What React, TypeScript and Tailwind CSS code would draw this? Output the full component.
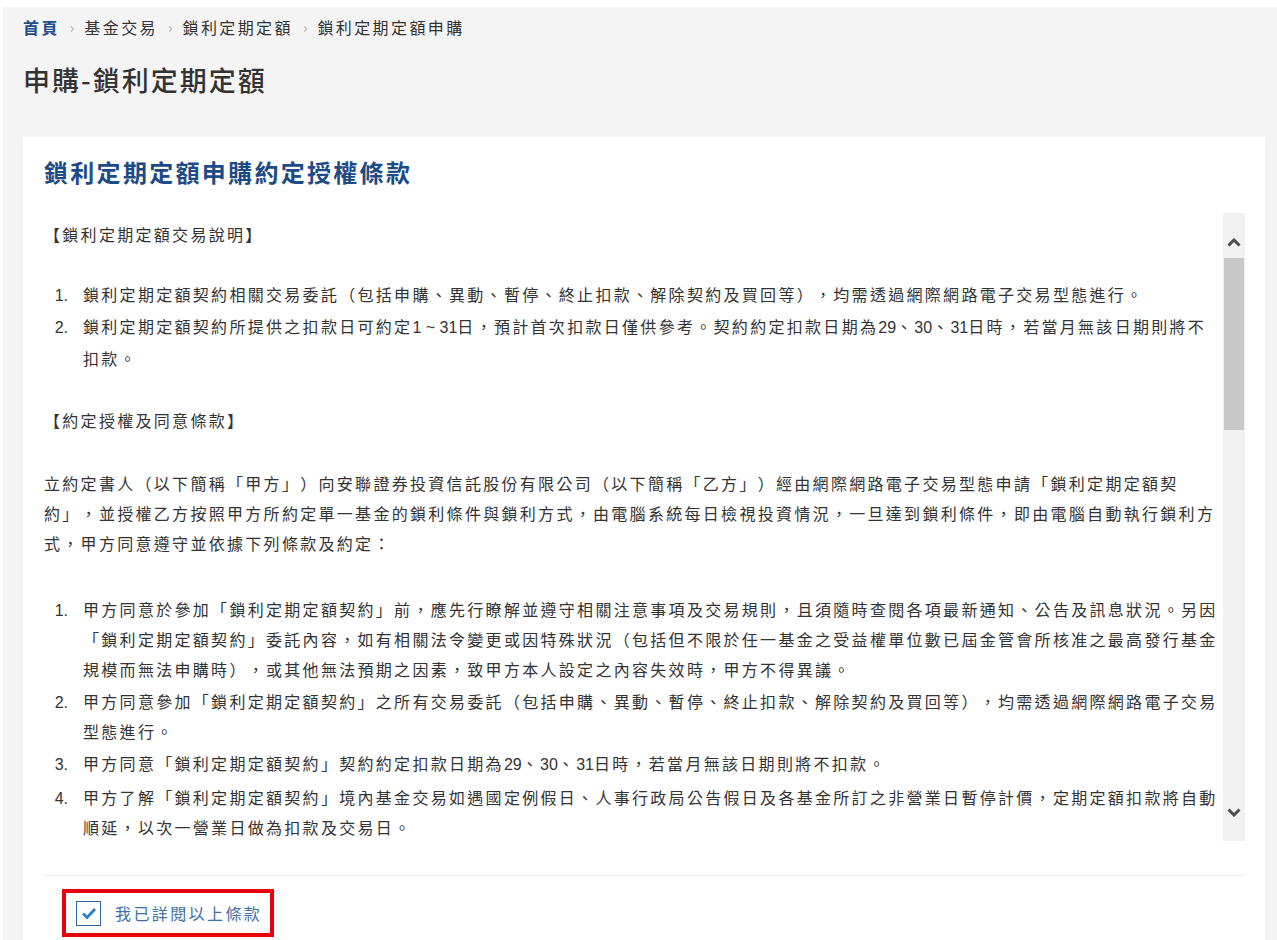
import React from "react";

const crumbs = ["首頁", "基金交易", "鎖利定期定額", "鎖利定期定額申購"];

const introItems = [
  "鎖利定期定額契約相關交易委託（包括申購、異動、暫停、終止扣款、解除契約及買回等），均需透過網際網路電子交易型態進行。",
  "鎖利定期定額契約所提供之扣款日可約定1 ~ 31日，預計首次扣款日僅供參考。契約約定扣款日期為29、30、31日時，若當月無該日期則將不扣款。",
];

const termItems = [
  "甲方同意於參加「鎖利定期定額契約」前，應先行瞭解並遵守相關注意事項及交易規則，且須隨時查閱各項最新通知、公告及訊息狀況。另因「鎖利定期定額契約」委託內容，如有相關法令變更或因特殊狀況（包括但不限於任一基金之受益權單位數已屆金管會所核准之最高發行基金規模而無法申購時），或其他無法預期之因素，致甲方本人設定之內容失效時，甲方不得異議。",
  "甲方同意參加「鎖利定期定額契約」之所有交易委託（包括申購、異動、暫停、終止扣款、解除契約及買回等），均需透過網際網路電子交易型態進行。",
  "甲方同意「鎖利定期定額契約」契約約定扣款日期為29、30、31日時，若當月無該日期則將不扣款。",
  "甲方了解「鎖利定期定額契約」境內基金交易如遇國定例假日、人事行政局公告假日及各基金所訂之非營業日暫停計價，定期定額扣款將自動順延，以次一營業日做為扣款及交易日。",
  "甲方同意乙方得依相關法令規定或實際作業需要，調整「鎖利定期定額契約」之作業方式及相關規定，並以網站公告方式通知甲方。",
  "甲方應妥善保管網路交易密碼，凡經使用甲方密碼所為之交易指示，均視為甲方本人所為。",
];

// digits in the source render narrow, without the CJK letter spacing
function Txt({ text }: { text: string }) {
  const parts = text.split(/([0-9~ ]+)/);
  return (
    <>
      {parts.map((p, i) =>
        /[0-9~]/.test(p) ? (
          <span key={i} className="font-['Liberation_Sans'] tracking-normal">{p}</span>
        ) : (
          <React.Fragment key={i}>{p}</React.Fragment>
        )
      )}
    </>
  );
}

function NumList({ items, gap }: { items: string[]; gap?: boolean }) {
  return (
    <ol className={gap ? "space-y-[2px]" : ""}>
      {items.map((t, i) => (
        <li key={t} className="flex items-baseline">
          <span className="w-[24px] shrink-0 text-right font-['Liberation_Sans'] tracking-normal">{i + 1}.</span>
          <span className="ml-[15px] flex-1">
            <Txt text={t} />
          </span>
        </li>
      ))}
    </ol>
  );
}

function Chevron({ up }: { up?: boolean }) {
  return (
    <svg width="14" height="9" viewBox="0 0 14 9">
      <polyline
        points={up ? "1.5,7.5 7,2 12.5,7.5" : "1.5,1.5 7,7 12.5,1.5"}
        fill="none"
        stroke="#4d4d4d"
        strokeWidth="3"
      />
    </svg>
  );
}

export default function App() {
  return (
    <div className="min-h-screen bg-white pl-[3px] pt-[7px] font-['Noto_Sans_CJK_TC','Noto_Sans',sans-serif] text-[#333] [text-spacing-trim:space-all]">
      <div className="min-h-[933px] bg-[#f4f4f4] pl-[20px] pr-[12px]">
        {/* breadcrumb */}
        <div className="flex items-center pt-[10px] text-[16px] leading-[20px] tracking-[2.4px]">
          {crumbs.map((c, i) => (
            <React.Fragment key={c}>
              {i > 0 && <span className="mx-[10px] text-[15px] tracking-normal text-[#aaa]">›</span>}
              <span className={i === 0 ? "font-bold text-[#1f4e8c]" : "text-[#333]"}>{c}</span>
            </React.Fragment>
          ))}
        </div>

        <h1 className="mt-[25px] text-[27px] font-medium leading-[36px] tracking-[2px] text-[#333]">申購-鎖利定期定額</h1>

        {/* card */}
        <div className="mt-[39px] bg-white pl-[21px] pr-[20px] pt-[18px]">
          <h2 className="text-[24px] font-bold leading-[34px] tracking-[2.3px] text-[#1d4b87]">鎖利定期定額申購約定授權條款</h2>

          <div className="mt-[24px] flex h-[628px]">
            <div className="flex-1 overflow-hidden pt-[6px] text-[16px] leading-[30px] tracking-[2.3px] text-[#333]">
              <p className="mb-[30px]">【鎖利定期定額交易說明】</p>
              <div className="mb-[32px]">
                <NumList items={introItems} />
              </div>
              <p className="mb-[33px]">【約定授權及同意條款】</p>
              <p className="mb-[36px]">
                立約定書人（以下簡稱「甲方」）向安聯證券投資信託股份有限公司（以下簡稱「乙方」）經由網際網路電子交易型態申請「鎖利定期定額契約」，並授權乙方按照甲方所約定單一基金的鎖利條件與鎖利方式，由電腦系統每日檢視投資情況，一旦達到鎖利條件，即由電腦自動執行鎖利方式，甲方同意遵守並依據下列條款及約定：
              </p>
              <NumList items={termItems} gap />
            </div>

            {/* scrollbar */}
            <div className="flex w-[22px] flex-col bg-[#f1f1f1]">
              <div className="flex h-[45px] items-end justify-center pb-[11px]">
                <Chevron up />
              </div>
              <div className="mx-[1px] h-[172px] bg-[#c8c8c8]" />
              <div className="flex-1" />
              <div className="flex h-[58px] items-center justify-center">
                <Chevron />
              </div>
            </div>
          </div>

          <div className="mt-[34px] border-t border-[#ececec]" />

          <div className="ml-[18px] mt-[13px] inline-flex h-[48px] items-center border-4 border-[#e8000b] pl-[10px] pr-[8px]">
            <span className="flex h-[25px] w-[25px] items-center justify-center border-[1.5px] border-[#34679c] bg-white">
              <svg width="16" height="13" viewBox="0 0 16 13">
                <polyline points="2,6.5 6,10.5 14,2" fill="none" stroke="#2a82c9" strokeWidth="2.8" />
              </svg>
            </span>
            <span className="ml-[14px] text-[16px] leading-[24px] tracking-[2.4px] text-[#3d6fa8]">我已詳閱以上條款</span>
          </div>
          <div className="h-[20px]" />
        </div>
      </div>
    </div>
  );
}
